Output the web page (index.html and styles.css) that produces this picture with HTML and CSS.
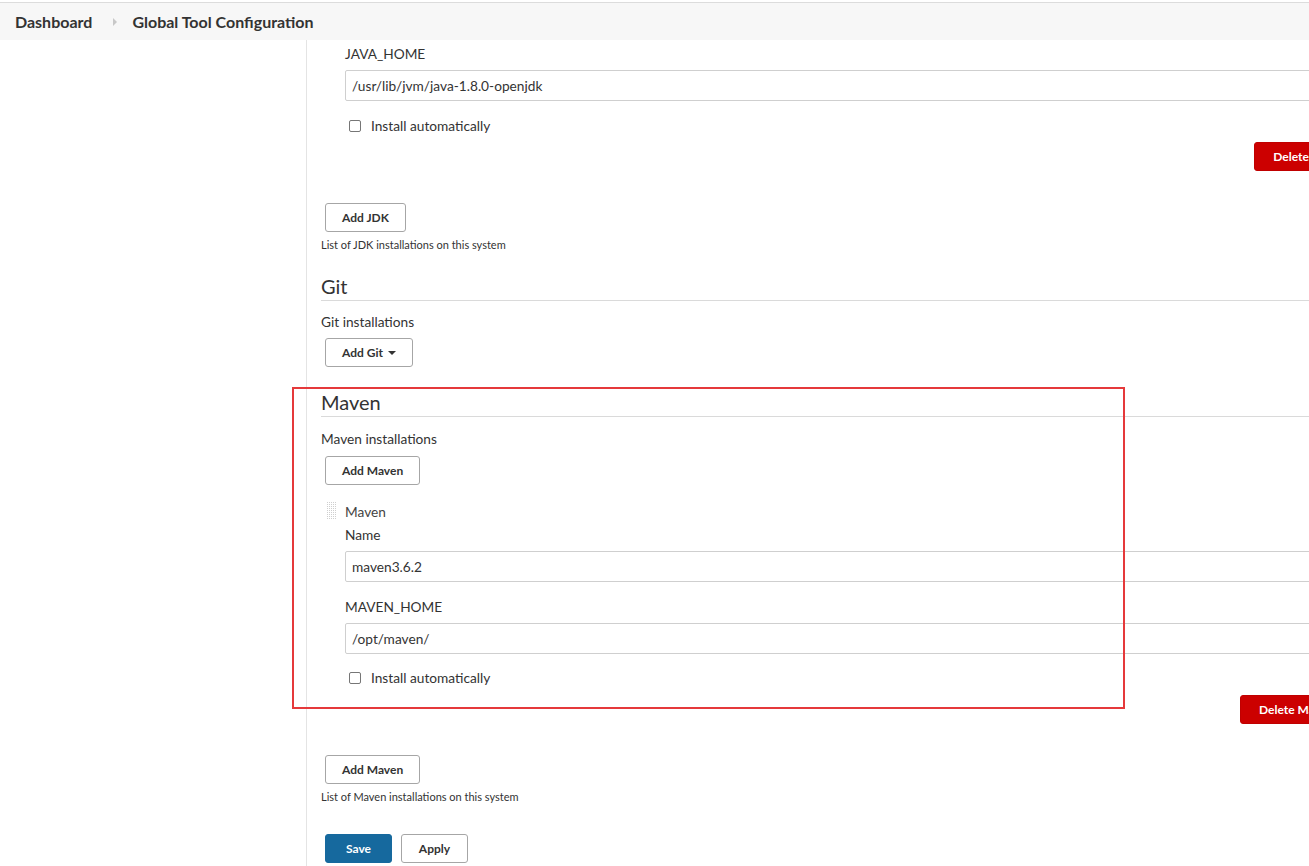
FILE: index.html
```html
<!DOCTYPE html>
<html lang="en">
<head>
<meta charset="utf-8">
<title>Global Tool Configuration</title>
<link rel="stylesheet" href="styles.css">
</head>
<body>
<div class="topline"></div>
<nav class="breadcrumbs">
  <a class="crumb">Dashboard</a>
  <svg class="sep" width="6" height="8" viewBox="0 0 6 8"><path d="M1 0 L5 4 L1 8 Z" fill="#c8c8c8"/></svg>
  <a class="crumb">Global Tool Configuration</a>
</nav>
<div class="page">
  <aside class="sidebar"></aside>
  <main class="main">
    <div class="repeated jdk">
      <div class="label first">JAVA_HOME</div>
      <input class="field" type="text" value="/usr/lib/jvm/java-1.8.0-openjdk">
      <label class="check"><span class="box"></span>Install automatically</label>
      <div class="delete-row"><button class="btn danger">Delete JDK</button></div>
    </div>
    <button class="btn add add-jdk">Add JDK</button>
    <div class="help">List of JDK installations on this system</div>

    <h2 class="section-title">Git</h2>
    <div class="sublabel">Git installations</div>
    <button class="btn add add-git">Add Git <span class="caret"></span></button>

    <h2 class="section-title maven-title">Maven</h2>
    <div class="sublabel maven-sub">Maven installations</div>
    <button class="btn add add-top">Add Maven</button>
    <div class="repeated maven">
      <div class="rep-header">
        <svg class="handle" width="10" height="17" viewBox="0 0 10 17">
          <defs><pattern id="dots" width="2" height="2" patternUnits="userSpaceOnUse"><rect width="1" height="1" fill="#cfcfcf"/></pattern></defs>
          <rect width="10" height="17" fill="url(#dots)"/>
        </svg>
        <span>Maven</span>
      </div>
      <div class="label">Name</div>
      <input class="field" type="text" value="maven3.6.2">
      <div class="label gap">MAVEN_HOME</div>
      <input class="field" type="text" value="/opt/maven/">
      <label class="check check2"><span class="box"></span>Install automatically</label>
      <div class="delete-row d2"><button class="btn danger">Delete Maven</button></div>
    </div>
    <button class="btn add add-bottom">Add Maven</button>
    <div class="help">List of Maven installations on this system</div>
    <div class="actions">
      <button class="btn save">Save</button>
      <button class="btn apply">Apply</button>
    </div>
  </main>
</div>
<div class="annotation"></div>
</body>
</html>
```
FILE: styles.css
```css
html, body {
  margin: 0;
  padding: 0;
  overflow: hidden;
  background: #fff;
}
body {
  font-family: Lato, "Noto Sans", sans-serif;
  color: #333;
  width: 1309px;
  height: 866px;
  position: relative;
}
.topline {
  height: 2px;
  border-bottom: 1px solid #dcdcdc;
  background: #fff;
}
.breadcrumbs {
  height: 37px;
  background: #f7f7f7;
  display: flex;
  align-items: center;
  padding-left: 15px;
}
.crumb {
  font-size: 16px;
  font-weight: 700;
  color: #333;
}
.sep {
  margin: 0 14px 0 20px;
}
.page {
  display: flex;
  width: 1365px;
  min-height: 826px;
}
.sidebar {
  width: 306px;
  flex: none;
  border-right: 1px solid #e4e4e4;
}
.main {
  flex: 1;
  padding: 0 12px 0 14px;
  display: flex;
  flex-direction: column;
  align-items: flex-start;
}
.repeated {
  padding-left: 24px;
  align-self: stretch;
}
.label {
  font-size: 13.7px;
  line-height: 18px;
  margin-top: 6px;
  margin-bottom: 7px;
}
.label.first { margin-top: 5px; }
.label.gap { margin-top: 16px; }
.field {
  display: block;
  box-sizing: border-box;
  width: 100%;
  height: 31px;
  border: 1px solid #cfcfcf;
  border-radius: 2px;
  padding: 0 6px;
  font-family: Lato, "Noto Sans", sans-serif;
  font-size: 13.7px;
  color: #333;
  margin: 0;
}
.check {
  display: flex;
  align-items: center;
  font-size: 13.7px;
  line-height: 18px;
  margin-top: 16px;
}
.check2 { margin-top: 15px; }
.box {
  width: 10px;
  height: 10px;
  border: 1px solid #767676;
  border-radius: 2px;
  margin: 0 10px 0 4px;
  background: #fff;
}
.delete-row {
  display: flex;
  justify-content: flex-end;
  margin-top: 7px;
}
.delete-row.d2 { margin-top: 8px; }
.btn {
  font-family: Lato, "Noto Sans", sans-serif;
  font-size: 12px;
  font-weight: 700;
  height: 29px;
  border-radius: 3px;
  padding: 0 16px;
  cursor: pointer;
  margin: 0;
}
.danger {
  background: #cc0000;
  color: #fff;
  border: 1px solid #c00000;
  padding: 0 18px;
}
.add {
  background: #fff;
  color: #333;
  border: 1px solid #a6a6a6;
  margin-left: 4px;
}
.add-jdk { margin-top: 32px; }
.add-git { margin-top: 7px; }
.add-top { margin-top: 8px; }
.add-bottom { margin-top: 31px; }
.caret {
  display: inline-block;
  width: 0;
  height: 0;
  border-left: 4px solid transparent;
  border-right: 4px solid transparent;
  border-top: 4px solid #333;
  vertical-align: 2px;
  margin-left: 2px;
}
.help {
  font-size: 11px;
  line-height: 14px;
  margin-top: 6px;
  color: #333;
}
.section-title {
  align-self: stretch;
  font-size: 20px;
  font-weight: 400;
  line-height: 24px;
  margin: 22px 0 0 0;
  padding-bottom: 2px;
  border-bottom: 1px solid #dadada;
  color: #333;
}
.section-title.maven-title { margin-top: 23px; }
.section-title + .sublabel { margin-top: 12px; }
.section-title + .sublabel.maven-sub { margin-top: 13px; }
.sublabel {
  font-size: 13.7px;
  line-height: 18px;
}
.repeated.maven { margin-top: 17px; }
.rep-header {
  display: flex;
  align-items: center;
  height: 18px;
  font-size: 13.7px;
  color: #444;
  position: relative;
}
.handle {
  position: absolute;
  left: -18px;
  top: 0;
}
.actions {
  display: flex;
  gap: 9px;
  margin-top: 30px;
  margin-left: 4px;
}
.save {
  background: #16699e;
  color: #fff;
  border: 1px solid #16699e;
  width: 67px;
}
.apply {
  background: #fff;
  color: #333;
  border: 1px solid #a6a6a6;
  width: 67px;
}
.annotation {
  position: absolute;
  left: 292px;
  top: 387px;
  width: 829px;
  height: 318px;
  border: 2px solid #e5393b;
  pointer-events: none;
}
```
